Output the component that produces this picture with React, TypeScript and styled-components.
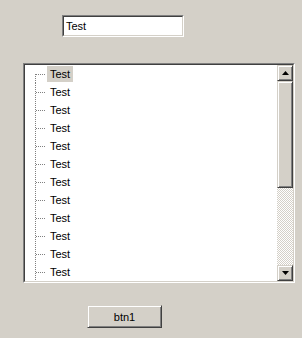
import React from "react";
import styled, { createGlobalStyle } from "styled-components";

const GlobalStyle = createGlobalStyle`
  html, body {
    margin: 0;
    padding: 0;
    background: #d4d0c8;
  }
  body {
    font-family: "Liberation Sans", Arial, sans-serif;
    font-size: 11px;
    color: #000;
  }
`;

const Page = styled.div`
  width: 302px;
  height: 338px;
  display: flex;
  flex-direction: column;
  align-items: flex-start;
  padding-top: 15px;
  box-sizing: border-box;
  background: #d4d0c8;
`;

const sunken = `
  border-style: solid;
  border-width: 1px;
  border-color: #808080 #fff #fff #808080;
`;

const TextBox = styled.div`
  ${sunken}
  margin-left: 62px;
  width: 122px;
  height: 22px;
  box-sizing: border-box;
  display: flex;
`;

const TextInner = styled.div`
  flex: 1;
  border-style: solid;
  border-width: 1px;
  border-color: #404040 #d4d0c8 #d4d0c8 #404040;
  background: #fff;
  padding: 0 2px;
  line-height: 18px;
`;

const TreeFrame = styled.div`
  ${sunken}
  margin: 26px 0 0 23px;
  width: 272px;
  height: 220px;
  box-sizing: border-box;
  display: flex;
`;

const TreeInner = styled.div`
  flex: 1;
  display: flex;
  border-style: solid;
  border-width: 1px;
  border-color: #404040 #d4d0c8 #d4d0c8 #404040;
  background: #fff;
  overflow: hidden;
`;

const TreeList = styled.ul`
  flex: 1;
  list-style: none;
  margin: 0;
  padding: 0 0 0 10px;
  overflow: hidden;
`;

const Row = styled.li`
  height: 18px;
  display: flex;
  align-items: center;
`;

const Label = styled.span<{ $selected?: boolean }>`
  height: 16px;
  line-height: 17px;
  padding: 0 3px;
  background: ${(p) => (p.$selected ? "#d4d0c8" : "transparent")};
`;

const ScrollBar = styled.div`
  width: 16px;
  display: flex;
  flex-direction: column;
`;

const raised = `
  box-sizing: border-box;
  background: #d4d0c8;
  border-style: solid;
  border-width: 1px;
  border-color: #d4d0c8 #404040 #404040 #d4d0c8;
  box-shadow: inset 1px 1px #fff, inset -1px -1px #808080;
`;

const ArrowButton = styled.div`
  ${raised}
  height: 16px;
  display: flex;
  align-items: center;
  justify-content: center;
`;

const Thumb = styled.div`
  ${raised}
  height: 107px;
`;

const Track = styled.div`
  flex: 1;
  background-color: #fff;
  background-image: conic-gradient(#d4d0c8 25%, #fff 0 50%, #d4d0c8 0 75%, #fff 0);
  background-size: 2px 2px;
`;

const Button = styled.button`
  ${raised}
  margin: 22px 0 0 87px;
  width: 75px;
  height: 23px;
  padding: 0;
  font-family: "Liberation Sans", Arial, sans-serif;
  font-size: 11px;
  color: #000;
`;

function Connector({ first }: { first?: boolean }) {
  return (
    <svg width="12" height="18" viewBox="0 0 12 18" shapeRendering="crispEdges">
      <line x1="0.5" y1={first ? 9 : 0} x2="0.5" y2="18" stroke="#808080" strokeDasharray="1 1" />
      <line x1="1" y1="9.5" x2="11" y2="9.5" stroke="#808080" strokeDasharray="1 1" />
    </svg>
  );
}

function Arrow({ up }: { up?: boolean }) {
  return (
    <svg width="7" height="4" viewBox="0 0 7 4">
      <path d={up ? "M3.5 0 L7 4 L0 4 Z" : "M0 0 L7 0 L3.5 4 Z"} fill="#000" />
    </svg>
  );
}

const items = Array.from({ length: 12 }, () => "Test");

export default function App() {
  return (
    <Page>
      <GlobalStyle />
      <TextBox>
        <TextInner>Test</TextInner>
      </TextBox>
      <TreeFrame>
        <TreeInner>
          <TreeList>
            {items.map((t, i) => (
              <Row key={i}>
                <Connector first={i === 0} />
                <Label $selected={i === 0}>{t}</Label>
              </Row>
            ))}
          </TreeList>
          <ScrollBar>
            <ArrowButton>
              <Arrow up />
            </ArrowButton>
            <Thumb />
            <Track />
            <ArrowButton>
              <Arrow />
            </ArrowButton>
          </ScrollBar>
        </TreeInner>
      </TreeFrame>
      <Button>btn1</Button>
    </Page>
  );
}
